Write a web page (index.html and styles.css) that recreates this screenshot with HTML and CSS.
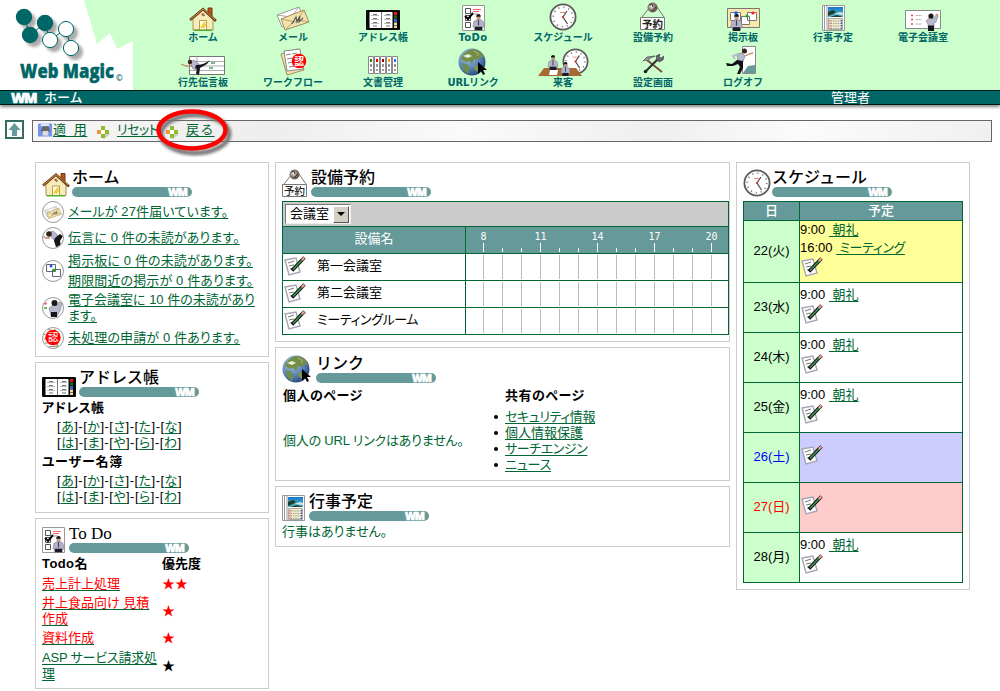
FILE: index.html
```html
<!DOCTYPE html>
<html lang="ja">
<head>
<meta charset="utf-8">
<title>Web Magic - ホーム</title>
<link rel="stylesheet" href="styles.css">
</head>
<body>
<svg class="defs" width="0" height="0" aria-hidden="true">
  <defs>
    <radialGradient id="ocean" cx=".35" cy=".3" r=".8"><stop offset="0" stop-color="#a9c6e8"/><stop offset=".55" stop-color="#5c84ba"/><stop offset="1" stop-color="#203a6c"/></radialGradient>
    <linearGradient id="sky" x1="0" y1="0" x2="0" y2="1"><stop offset="0" stop-color="#1976c8"/><stop offset="1" stop-color="#50b8c8"/></linearGradient>
    <radialGradient id="steel" cx=".4" cy=".4" r=".7"><stop offset="0" stop-color="#eee"/><stop offset=".5" stop-color="#87766c"/><stop offset="1" stop-color="#4d443e"/></radialGradient>
    <filter id="soft" x="-30%" y="-30%" width="160%" height="160%"><feGaussianBlur stdDeviation="1.6"/></filter>
  </defs>
  <symbol id="house" viewBox="0 0 28 24">
    <path d="M19 1h4v9h-4z" fill="#b5541c" stroke="#7b3512"/>
    <path d="M4 12 14 3l10 9v11H4z" fill="#f7ecb8" stroke="#a89058"/>
    <path d="M1 13 14 2l13 12" fill="none" stroke="#6b3a12" stroke-width="2.4"/>
    <path d="M1.500 12.500 14 2l12 10.500" fill="none" stroke="#c99552"/>
    <path d="M10.500 13.500h7V23h-7z" fill="#fffbe0" stroke="#b89b57"/>
    <path d="m12 21 4-6m-2 6 3-4" stroke="#f4c728" stroke-width="1.500"/>
    <path d="m12 7 2 2 1-3z" fill="#c22"/><path d="m14 9 2-1" stroke="#363"/>
    <path d="M5 23.300h18" stroke="#4fae28" stroke-width="1.400"/>
  </symbol>
  <symbol id="mail" viewBox="0 0 34 25">
    <path d="m1 9 22-8 5 12-22 8z" fill="#fff" stroke="#999"/><path d="m1 9 14 2 8-10" fill="none" stroke="#aaa"/>
    <path d="m5 13 23-9 5 12-24 8z" fill="#f3e2ac" stroke="#a18c5a"/><path d="m5 13 15 3 8-12M9 24l8-8m16 0-11-2" fill="none" stroke="#b8a269"/>
    <path d="m16 18 4-7 1 5 3-6-1 6 4-4" fill="none" stroke="#555" stroke-width="1.100"/>
  </symbol>
  <symbol id="book" viewBox="0 0 34 20">
    <rect width="34" height="20" rx="1" fill="#080808"/><path d="M3.500 2h11.500v16H3.500zM16 2h10.500v16H16z" fill="#fff"/>
    <path d="M15.500 2v16" stroke="#777"/>
    <path d="M5 5.500h8M5 9.500h8M5 13.500h8M18 5.500h7M18 9.500h7M18 13.500h7" stroke="#bbb"/>
    <path d="M7 4.500h4M7 8.500h4M7 12.500h4M7 16h4M20 4.500h4M20 8.500h4M20 12.500h4M20 16h4" stroke="#777"/>
    <path d="M28 2h3v3h-3z" fill="#e11"/><path d="M28 5.500h3v3h-3z" fill="#176d1c"/><path d="M28 9h3v3h-3z" fill="#36c"/><path d="M28 12.500h3v2.500h-3zM28 15.500h3V18h-3z" fill="#f0dca0"/>
  </symbol>
  <symbol id="man" viewBox="0 0 12 18">
    <path d="M4 2q2-3 4 0v4H4z" fill="#c59a7e"/><path d="M3.500 3q0-3 3-3 2 0 2 3z" fill="#1b1512"/>
    <path d="m1 8 4-2h3l3 2 1 6-2 1v2H2v-2L0 14z" fill="#b4b4c8" stroke="#777790" stroke-width=".6"/><path d="M6 6.500v6" stroke="#445" stroke-width="1.300"/><path d="M2 14h8v4H2z" fill="#1c1c26"/>
  </symbol>
  <symbol id="todo" viewBox="0 0 23 26">
    <path d="M.5.500h22v25H.5z" fill="#fff" stroke="#999"/>
    <path d="M3.500 3.500h5v5h-5zM3.500 10.500h5v5h-5zM3.500 17.500h5v5h-5z" fill="#fff" stroke="#555"/>
    <path d="m3 11 3 3 5-6" fill="none" stroke="#000" stroke-width="2"/>
    <path d="M11 4.500h8M11 6.500h6" stroke="#e66"/><path d="M11 9h5" stroke="#999"/>
    <use href="#man" x="10" y="9" width="13" height="16.500"/>
  </symbol>
  <symbol id="clock" viewBox="0 0 28 28">
    <circle cx="14" cy="14" r="12.600" fill="#fff" stroke="#5a5a5a" stroke-width="1.800"/>
    <circle cx="14" cy="14" r="9.800" fill="none" stroke="#888" stroke-width="1.800" stroke-dasharray="1.200 3.930"/>
    <path d="M11 9.500h5" stroke="#e88"/><path d="m18 8-4 6 4.500 7" fill="none" stroke="#555" stroke-width="1.300"/><circle cx="14" cy="14" r="1" fill="#e22"/>
  </symbol>
  <symbol id="reserve" viewBox="0 0 26 28">
    <path d="m2 15 8-10h7l7 10" fill="none" stroke="#777"/><circle cx="12.500" cy="5.500" r="5" fill="url(#steel)"/><path d="m9 3 3-1 1 3m-1 4 4-4" fill="none" stroke="#383330"/>
    <path d="M.5 15.500h24v12H.5z" fill="#fff" stroke="#777"/><text x="2" y="25.500" font-size="10.500" fill="#222">予約</text>
  </symbol>
  <symbol id="board" viewBox="0 0 33 23">
    <path d="M.5.500h32v19H.5z" fill="#f8e8aa" stroke="#777"/><path d="M3.500 4.500h10v8h-10zM14.500 8.500h8v8h-8zM20.500 4.500h9v8h-9z" fill="#fff" stroke="#777"/>
    <circle cx="9" cy="5" r="1.800" fill="#25f"/><circle cx="20" cy="8" r="1.600" fill="#2a2"/><circle cx="26" cy="5" r="1.600" fill="#e22"/>
    <use href="#man" x="3" y="6" width="13" height="17"/>
  </symbol>
  <symbol id="calendar" viewBox="0 0 23 26">
    <path d="M.5.500h22v25H.5z" fill="#fff" stroke="#999"/><path d="M2.500 1v24M5 1v24" stroke="#999"/>
    <path d="M6 2h15v10H6z" fill="url(#sky)"/><path d="m6 7 5-2 3 2-3 2-5 2zM8 12l7-2 6 2z" fill="#263d25"/><path d="m12 9 6-2 3 1v2z" fill="#cfe3e5"/>
    <path d="M6.500 13.500h14v11h-14z" fill="#eee9c6" stroke="#aaa"/><path d="M9 16h10M9 18.500h10M9 21h10M9 23.500h10" stroke="#8a8a86" stroke-dasharray="1 1.200"/>
    <path d="M8 15v10" stroke="#e22" stroke-dasharray="1.300 1.200"/><path d="M19.500 15v10" stroke="#22d" stroke-dasharray="1.300 1.200"/>
  </symbol>
  <symbol id="meeting" viewBox="0 0 36 21">
    <path d="M.5.500h35v18H.5z" fill="#fff" stroke="#888"/><path d="M6 5.500h2M6 9.500h2M6 14h2" stroke="#e44" stroke-width="1.300"/><path d="M11 5.500h6M11 9.500h6M11 14h6" stroke="#aaa" stroke-dasharray="2 .7"/>
    <path d="m21 11 3-3h5l2-3 2 1-2 6-2 1v4h-6v-3z" fill="#b5b9c9" stroke="#667" stroke-width=".5"/><circle cx="26" cy="6" r="2.600" fill="#211814"/><path d="M23 15.500h6V21h-6z" fill="#15151b"/><circle cx="32" cy="5" r="1.300" fill="#c59a7e"/>
  </symbol>
  <symbol id="message" viewBox="0 0 45 20">
    <path d="M8.500.500h35v18h-35z" fill="#fff" stroke="#777"/><path d="M9 5.500h34M9 10h34M9 14.500h34M16 1v18" stroke="#999" stroke-width=".8"/><path d="M30 7h4M28 12h4" stroke="#4aa764" stroke-width="1.600"/>
    <path d="m9 6 4-2 5 4-2 6-4-1z" fill="#b5b8d0" stroke="#667" stroke-width=".5"/><circle cx="9" cy="6" r="2.200" fill="#35241c"/><path d="M11 10H5L0 8" fill="none" stroke="#c18a6b" stroke-width="1.300"/>
    <path d="M15 9q8 0 14-5l-3 4-7 4-1 7-3-1 1-5-2-1z" fill="#16161c"/>
  </symbol>
  <symbol id="workflow" viewBox="0 0 27 28">
    <path d="m1 6 17-5 6 21-17 5z" fill="#f3e2ac" stroke="#a18c5a"/><path d="m4 3 16-2 3 20-16 2z" fill="#fff" stroke="#888"/>
    <path d="m6 7 5-1m1 0 5-1m-10 6 5-1m1 0 5-1m-10 6 5-1m-4 5 5-1" stroke="#888"/><circle cx="19" cy="13" r="7.300" fill="#f00"/><text x="14.200" y="16.800" font-size="9.800" fill="#fff">認</text>
  </symbol>
  <symbol id="docs" viewBox="0 0 30 18">
    <path d="M.5.500h5v17h-5zM6.500.500h5v17h-5zM12.500.500h5v17h-5zM18.500.500h5v17h-5zM24.500.500h5v17h-5z" fill="#fff" stroke="#888"/>
    <path d="M2 3h2v3H2z" fill="#280"/><path d="M8 3h2v3H8z" fill="#e00"/><path d="M14 3h2v3h-2z" fill="#900"/><path d="M20 3h2v3h-2z" fill="#f90"/><path d="M26 3h2v3h-2z" fill="#36f"/>
    <path d="M3 8v3m0 2v2M9 8v3m0 2v2M15 8v3m0 2v2M21 8v3m0 2v2M27 8v3m0 2v2" stroke="#777" stroke-width="1.500"/>
  </symbol>
  <symbol id="globe" viewBox="0 0 30 28">
    <circle cx="14" cy="14" r="13.500" fill="url(#ocean)"/><path d="M4 8Q9 1 16 1l7 3 3 6-4-1-2 3-4-1-2 5-3-3-3 1-5-3z" fill="#748f45"/><path d="m4 15 5 1 3 5-2 5-5-4z" fill="#6d8c51"/><path d="m17 17 4 1 3 4-4 2-4-3z" fill="#7a9850"/><path d="m5 8 5-2 4 2-4 2z" fill="#e7eddf"/><path d="m16 3 5 3-2 2" fill="none" stroke="#b5b174"/>
    <path d="M20 14v12l3-3 2 4 2-1-2-4h4z" fill="#000"/>
  </symbol>
  <symbol id="visitor" viewBox="0 0 51 28">
    <use href="#clock" x="24" y="0" width="27" height="27"/><path d="m6 20 32 0 6 8H0z" fill="#a66b32"/><path d="M12 22h8l-1 5h-8z" fill="#fff"/>
    <use href="#man" x="9" y="7" width="12" height="15"/><use href="#man" x="21" y="14" width="13" height="14"/>
  </symbol>
  <symbol id="tools" viewBox="0 0 22 20">
    <path d="m5 6 15 12" stroke="#76503d" stroke-width="2"/><path d="m1 7 4-4 8-1-5 2-2 3-3-1z" fill="#999" stroke="#555" stroke-width=".8"/><path d="M4 17 16 5" stroke="#333" stroke-width="2.200"/><path d="m15 6-1-4 4-2-1 3 2 1 3-2-1 4-4 2z" fill="#667" stroke="#333" stroke-width=".6"/><circle cx="3.500" cy="17.500" r="1.800" fill="#222"/>
  </symbol>
  <symbol id="logoff" viewBox="0 0 30 29">
    <path d="M16.500.500h13v27h-13z" fill="#fff" stroke="#888"/><path d="m17 27 5-7 7-1v8z" fill="#699"/><circle cx="18.500" cy="5" r="2.500" fill="#342019"/>
    <path d="m11 8 5-1 3 3-2 6-5-1z" fill="#b6b8cc" stroke="#667" stroke-width=".5"/><path d="m12 8-5 2 2 3" fill="none" stroke="#b6b8cc" stroke-width="1.800"/><path d="m19 10 4-2 4-1" fill="none" stroke="#c18a6b" stroke-width="1.300"/>
    <path d="m11 14 6 1 0 7-3 6h-3l3-7-2-3-5 2H1l-1-3 6 1z" fill="#111117"/>
  </symbol>
  <symbol id="edit" viewBox="0 0 22 20">
    <path d="m1 4 11-2 4 14-11 3z" fill="#fff" stroke="#a5a5b3" stroke-width="1.400"/><path d="m4 7 6-2M5 10l5-1m-4 4 3-1" stroke="#777"/>
    <path d="m8 14.500 10-10.500" stroke="#111" stroke-width="3.400"/><path d="m9 13.500 9-9.500" stroke="#3c9a50" stroke-width="1.500"/><path d="m18 4 2.500-2.500" stroke="#422" stroke-width="3.400"/><path d="m18 4 2.200-2.300" stroke="#efb0ac" stroke-width="1.900"/>
  </symbol>
  <symbol id="disk" viewBox="0 0 16 14"><rect width="15" height="14" rx="1" fill="#7294ea"/><path d="M3 0h9v3H3z" fill="#dce6fb"/><path d="m3 8 2-5h6l2 5-1 1H4z" fill="#666"/><path d="M5 8h6v5H5z" fill="#ddd"/></symbol>
  <symbol id="cross" viewBox="0 0 14 14"><path d="m10 4 4 5-6 5-3-2z" fill="#ccc"/><path d="M5 1h4v4H5zM9 5h4v4H9zM5 9h4v4H5z" fill="#8dbe28"/><path d="M1 5h4v4H1z" fill="#f0963c"/><path d="M5 5h4v4H5z" fill="#fff"/></symbol>
</svg>

<header class="top">
  <svg class="logo" width="133" height="90" viewBox="0 0 133 90">
    <path d="M0 0h84l13 44 13-11 7 16 16-8v49H0z" fill="#fff"/>
    <g fill="#aaa" filter="url(#soft)"><circle cx="28" cy="21" r="8"/><circle cx="49" cy="27" r="8"/><circle cx="34" cy="39" r="8"/><circle cx="54" cy="44" r="8"/><circle cx="70" cy="33" r="8"/><circle cx="75" cy="52" r="8"/></g>
    <path d="m24 17 6 18 15-12 5 17 16-11 5 19" fill="none" stroke="#066"/>
    <g fill="#066"><circle cx="24" cy="17" r="8.200"/><circle cx="45" cy="23" r="8.200"/><circle cx="30" cy="35" r="8.200"/></g>
    <g fill="#fff" stroke="#066"><circle cx="50" cy="40" r="7.600"/><circle cx="66" cy="29" r="7.600"/><circle cx="71" cy="48" r="7.600"/></g>
    <text class="brand" x="20" y="78" textLength="94" lengthAdjust="spacingAndGlyphs">Web Magic</text><text class="brand-mark" x="116" y="81">©</text>
  </svg>
  <nav class="menu">
    <a><svg width="28" height="24"><use href="#house"/></svg>ホーム</a>
    <a><svg width="34" height="25"><use href="#mail"/></svg>メール</a>
    <a><svg class="up1" width="34" height="20"><use href="#book"/></svg>アドレス帳</a>
    <a><svg width="23" height="26"><use href="#todo"/></svg><span class="wide">ToDo</span></a>
    <a><svg width="28" height="28"><use href="#clock"/></svg>スケジュール</a>
    <a><svg class="up1" width="26" height="28"><use href="#reserve"/></svg>設備予約</a>
    <a><svg width="33" height="23"><use href="#board"/></svg>掲示板</a>
    <a><svg width="23" height="26"><use href="#calendar"/></svg>行事予定</a>
    <a><svg width="36" height="21"><use href="#meeting"/></svg>電子会議室</a>
    <a><svg width="45" height="20"><use href="#message"/></svg>行先伝言板</a>
    <a><svg width="27" height="28"><use href="#workflow"/></svg>ワークフロー</a>
    <a><svg class="up2" width="30" height="18"><use href="#docs"/></svg>文書管理</a>
    <a><svg width="30" height="28"><use href="#globe"/></svg><span class="tight">URLリンク</span></a>
    <a><svg width="51" height="28"><use href="#visitor"/></svg>来客</a>
    <a><svg class="up2" width="22" height="20"><use href="#tools"/></svg>設定画面</a>
    <a><svg class="up1 left" width="30" height="29"><use href="#logoff"/></svg>ログオフ</a>
  </nav>
</header>
<div class="bar"><span class="mark">WM</span><b class="where">ホーム</b><span>管理者</span></div>

<div class="tools-row">
  <svg width="19" height="19"><path d="M1 1h17v17H1z" fill="#fff" stroke="#366b60" stroke-width="2"/><path d="m9.500 3 6 7h-3.500v6h-5v-6H3.500z" fill="#699"/></svg>
  <div class="toolbar">
    <svg width="15" height="14"><use href="#disk"/></svg><a class="t1">適&ensp;用</a>
    <svg class="x1" width="14" height="14"><use href="#cross"/></svg><a class="t2">リセット</a>
    <svg class="x2" width="14" height="14"><use href="#cross"/></svg><a class="t3">戻る</a>
    <svg class="ring" width="84" height="54"><ellipse cx="43" cy="31" rx="34" ry="19" fill="none" stroke="#777" stroke-width="5" filter="url(#soft)"/><ellipse cx="40" cy="27" rx="33.500" ry="18.500" fill="none" stroke="#f00" stroke-width="4.500"/></svg>
  </div>
</div>

<main class="columns">
  <div class="col">
    <section class="panel p-home">
      <h2><svg width="28" height="25"><use href="#house"/></svg><span class="ttl">ホーム<i>WM</i></span></h2>
      <ul class="news">
        <li><span class="dot"><svg width="18" height="13"><use href="#mail"/></svg></span><a class="wider">メールが 27件届いています。</a></li>
        <li><span class="dot"><svg width="24" height="18" viewBox="0 0 24 18"><path d="m7 4 5-2 7 6-2 6-5-4z" fill="#b5b8d0" stroke="#667" stroke-width=".5"/><circle cx="8" cy="5" r="2.800" fill="#35241c"/><path d="M9 9H5L1 7" fill="none" stroke="#c18a6b" stroke-width="1.500"/><path d="m14 9 5-4 3 2-3 5 1 5-5 1-2-6z" fill="#16161c"/></svg></span><a class="wider">伝言に 0 件の未読があります。</a></li>
        <li class="tall"><span class="dot"><svg width="15" height="13"><path d="M.5.500h9v7h-9zM6.500 5.500h8v7h-8z" fill="#fff" stroke="#667"/><circle cx="5" cy="2" r="1.500" fill="#25f"/><circle cx="8" cy="6" r="1.500" fill="#2a2"/></svg></span><span><a class="wider">掲示板に 0 件の未読があります。</a><br><a class="wider">期限間近の掲示が 0 件あります。</a></span></li>
        <li class="two"><span class="dot"><svg width="20" height="18" viewBox="0 0 20 18"><path d="M1 4.500h3" stroke="#e66" stroke-width="2"/><path d="M1 9h3" stroke="#6b6" stroke-width="2"/><path d="m6 9 4-3h5l1-3 3 1-2 8-3 5H8z" fill="#b5b9c9" stroke="#667" stroke-width=".5"/><circle cx="11.500" cy="4" r="3" fill="#211814"/><path d="M8 13h6v5H8z" fill="#15151b"/></svg></span><a>電子会議室に 10 件の未読があり<br>ます。</a></li>
        <li><span class="dot"><svg width="18" height="18" viewBox="10.500 5 17 17"><use href="#workflow" width="27" height="28"/></svg></span><a class="wider">未処理の申請が 0 件あります。</a></li>
      </ul>
    </section>
    <section class="panel p-addr">
      <h2><svg width="34" height="20"><use href="#book"/></svg><span class="ttl">アドレス帳<i>WM</i></span></h2>
      <h3>アドレス帳</h3>
      <p class="kana">[<a>あ</a>]-[<a>か</a>]-[<a>さ</a>]-[<a>た</a>]-[<a>な</a>]<br>[<a>は</a>]-[<a>ま</a>]-[<a>や</a>]-[<a>ら</a>]-[<a>わ</a>]</p>
      <h3>ユーザー名簿</h3>
      <p class="kana">[<a>あ</a>]-[<a>か</a>]-[<a>さ</a>]-[<a>た</a>]-[<a>な</a>]<br>[<a>は</a>]-[<a>ま</a>]-[<a>や</a>]-[<a>ら</a>]-[<a>わ</a>]</p>
    </section>
    <section class="panel p-todo">
      <h2><svg width="23" height="26"><use href="#todo"/></svg><span class="ttl serif">To Do<i>WM</i></span></h2>
      <div class="tasks">
        <b class="wide">Todo名</b><b>優先度</b>
        <a class="late">売上計上処理</a><span class="late">★★</span>
        <a class="late">井上食品向け 見積<br>作成</a><span class="late">★</span>
        <a class="late">資料作成</a><span class="late">★</span>
        <a class="tight">ASP サービス請求処<br>理</a><span>★</span>
      </div>
    </section>
  </div>

  <div class="col">
    <section class="panel p-res">
      <h2><svg width="26" height="28"><use href="#reserve"/></svg><span class="ttl">設備予約<i>WM</i></span></h2>
      <div class="rooms">
        <div class="pick"><span class="select">会議室<em></em></span></div>
        <div class="rh name">設備名</div>
        <div class="rh hours"><span>8</span><span></span><span></span><span>11</span><span></span><span></span><span>14</span><span></span><span></span><span>17</span><span></span><span></span><span>20</span></div>
        <div class="room"><svg width="22" height="20"><use href="#edit"/></svg>第一会議室</div><div class="slots"></div>
        <div class="room"><svg width="22" height="20"><use href="#edit"/></svg>第二会議室</div><div class="slots"></div>
        <div class="room"><svg width="22" height="20"><use href="#edit"/></svg><span class="tighter">ミーティングルーム</span></div><div class="slots"></div>
      </div>
    </section>
    <section class="panel p-link">
      <h2><svg width="30" height="28"><use href="#globe"/></svg><span class="ttl">リンク<i>WM</i></span></h2>
      <div class="links">
        <div><h3>個人のページ</h3><p class="none tight">個人の URL リンクはありません。</p></div>
        <div><h3>共有のページ</h3><ul><li><a class="tighter">セキュリティ情報</a></li><li><a>個人情報保護</a></li><li><a class="tighter">サーチエンジン</a></li><li><a class="tight">ニュース</a></li></ul></div>
      </div>
    </section>
    <section class="panel p-event">
      <h2><svg width="23" height="26"><use href="#calendar"/></svg><span class="ttl">行事予定<i>WM</i></span></h2>
      <p class="none ev">行事はありません。</p>
    </section>
  </div>

  <div class="col">
    <section class="panel p-sched">
      <h2><svg width="28" height="28"><use href="#clock"/></svg><span class="ttl">スケジュール<i>WM</i></span></h2>
      <div class="week">
        <b>日</b><b>予定</b>
        <div class="day">22(火)</div><div class="plan today"><p>9:00 <a>&nbsp;朝礼</a></p><p>16:00 <a class="tighter">&nbsp;ミーティング</a></p><svg width="22" height="20"><use href="#edit"/></svg></div>
        <div class="day">23(水)</div><div class="plan"><p>9:00 <a>&nbsp;朝礼</a></p><svg width="22" height="20"><use href="#edit"/></svg></div>
        <div class="day">24(木)</div><div class="plan"><p>9:00 <a>&nbsp;朝礼</a></p><svg width="22" height="20"><use href="#edit"/></svg></div>
        <div class="day">25(金)</div><div class="plan"><p>9:00 <a>&nbsp;朝礼</a></p><svg width="22" height="20"><use href="#edit"/></svg></div>
        <div class="day sat">26(土)</div><div class="plan sat"><svg width="22" height="20"><use href="#edit"/></svg></div>
        <div class="day sun">27(日)</div><div class="plan sun"><svg width="22" height="20"><use href="#edit"/></svg></div>
        <div class="day">28(月)</div><div class="plan"><p>9:00 <a>&nbsp;朝礼</a></p><svg width="22" height="20"><use href="#edit"/></svg></div>
      </div>
    </section>
  </div>
</main>
</body>
</html>
```
FILE: styles.css
```css
* { box-sizing: border-box; margin: 0; padding: 0; }
body { width: 1000px; height: 691px; overflow: hidden; background: #fff; color: #000; font: 13px/16px "Liberation Sans", "Noto Sans CJK JP", sans-serif; font-feature-settings: "palt"; white-space: nowrap; }
svg { display: block; flex: none; }
svg text { font-family: "Noto Sans CJK JP", sans-serif; font-feature-settings: normal; }
ul { list-style: none; }
.defs { position: absolute; }
.top { display: flex; height: 90px; background: #cfc; }
svg .brand { font: 800 20px "Open Sans", sans-serif; fill: #066; stroke: #066; stroke-width: .4px; }
svg .brand-mark { font: bold 8px "Open Sans", sans-serif; fill: #066; }
.menu { display: grid; grid-template-columns: repeat(9, 90px); grid-template-rows: 45px 45px; margin-left: 25px; }
.menu a { display: flex; flex-direction: column; gap: 1px; align-items: center; justify-content: flex-end; padding-bottom: 1px; color: #066; font: bold 10px/12px "DejaVu Sans", "Noto Sans CJK JP", sans-serif; font-feature-settings: normal; }
.up1 { margin-bottom: 1px; }
.up2 { margin-bottom: 2px; }
.left { margin-right: 5px; }
.wide { letter-spacing: .4px; }
.wider { letter-spacing: .13px; }
.tight { letter-spacing: -.2px; }
.tighter { letter-spacing: -.4px; }
.bar { display: flex; align-items: center; height: 15px; padding-left: 10px; border: solid #001a1a; border-width: 1px 0; background: #066; color: #fff; box-shadow: 0 2px 3px #888; }
.mark, .ttl i { font-family: "Open Sans", sans-serif; font-style: normal; font-weight: 800; color: #fff; -webkit-text-stroke: .6px #fff; }
.mark { width: 28px; padding-left: 1px; font-size: 14px; line-height: 13px; letter-spacing: -1.500px; }
.where { width: 793px; padding-left: 6px; font-weight: 500; font-feature-settings: normal; }
.tools-row { display: flex; gap: 8px; padding: 15px 8px 0 5px; }
.toolbar { position: relative; display: flex; align-items: center; flex: 1; height: 22px; padding: 0 0 2px 5px; border: 1px solid #666; background: linear-gradient(100deg, #f6f6f6, #eee 25%, #fafafa 45%, #efefef 65%, #fbfbfb 80%, #f0f0f0); }
a { color: #063; text-decoration: underline; text-underline-offset: 2px; text-decoration-thickness: 1px; }
.menu a { color: #066; text-decoration: none; }
.t1 { width: 43px; letter-spacing: .6px; }
.t2 { width: 55px; padding-left: 7px; letter-spacing: -.5px; }
.t3 { padding-left: 7px; letter-spacing: 2px; }
.x1, .x2 { margin-top: 3px; }
.ring { position: absolute; left: 119px; top: -18px; }
.columns { display: flex; gap: 6px; padding: 20px 30px 0 35px; }
.col { display: flex; flex-direction: column; gap: 5px; width: 234px; }
.col:nth-child(2) { width: 455px; }
.panel { border: 1px solid #ccc; padding: 0 6px; }
.p-home { height: 195px; }
.p-addr { height: 151px; }
.p-todo { height: 171px; }
.p-res { height: 180px; padding-right: 0; }
.p-link { height: 134px; }
.p-event { height: 61px; }
.p-sched { height: 428px; }
h2 { display: flex; align-items: flex-end; gap: 2px; height: 34px; font-weight: 500; }
.ttl { display: flex; flex-direction: column; width: 120px; font-size: 16px; line-height: 18px; font-feature-settings: normal; }
.ttl.serif { font-family: "Liberation Serif", serif; font-size: 17px; font-weight: normal; }
.ttl i { height: 10px; padding-right: 5px; border-radius: 5px; background: #699; font-size: 10.500px; line-height: 10px; letter-spacing: -1px; text-align: right; }
.p-addr h2, .p-res h2 { gap: 3px; }
.p-sched h2 { gap: 1px; }
.p-link h2 { height: 35px; gap: 4px; }
.p-event h2, .p-todo h2 { gap: 4px; }
h3 { font-size: 13px; line-height: 16px; font-weight: bold; letter-spacing: .5px; }
.news { padding-top: 2px; }
.news li { display: flex; align-items: center; gap: 4px; height: 26px; }
.news .tall { height: 39px; line-height: 20px; }
.news .two { height: 35px; }
.dot { display: flex; align-items: center; justify-content: center; flex: none; width: 22px; height: 22px; border: 1px solid #999; border-radius: 50%; overflow: hidden; }
.p-addr h3 { padding-top: 2px; line-height: 18px; letter-spacing: .3px; }
.kana { padding: 2px 0 0 15px; letter-spacing: .5px; }
.p-addr .kana + h3 { padding-top: 2px; letter-spacing: .8px; }
.tasks { display: grid; grid-template-columns: 120px 1fr; grid-template-rows: 22px 18px 36px 18px 38px; align-items: center; }
.late { color: #f00; text-decoration-color: #063; }
.rooms { display: grid; grid-template-columns: 182px 262px; grid-template-rows: 24px repeat(4, 26px); gap: 1px; width: 447px; margin-top: 4px; padding: 1px; background: #063; }
.rooms > div { background: #fff; }
.rooms > .pick { grid-column: 1 / 3; padding: 2px; background: #ccc; }
.select { display: flex; align-items: center; justify-content: space-between; width: 66px; height: 20px; padding: 0 1px 0 4px; border: 1px solid; border-color: #777 #eee #eee #777; background: #fff; }
.select em { display: flex; align-items: center; justify-content: center; width: 16px; height: 17px; border: 1px solid; border-color: #fff #555 #555 #fff; background: #d4d0c8; }
.select em::before { content: ""; border: solid transparent; border-width: 4px 4px 0; border-top-color: #000; }
.rooms > .rh { background: #699; color: #fff; }
.name { text-align: center; line-height: 24px; }
.hours { display: grid; grid-template-columns: repeat(13, 19px); padding-left: 8px; font: 10px/12px "DejaVu Sans Mono", monospace; }
.hours span { display: flex; flex-direction: column; align-items: center; justify-content: flex-end; padding-bottom: 1px; }
.hours span::after { content: ""; width: 1px; height: 4px; background: #fff; }
.hours span:nth-child(3n+1)::after { height: 9px; }
.room { display: flex; align-items: center; gap: 11px; padding: 0 0 2px 1px; }
.rooms > .slots { background: repeating-linear-gradient(90deg, #bbb 0 1px, transparent 1px 19px) 17px 1px / 229px 24px no-repeat #fff; }
.links { display: grid; grid-template-columns: 222px 1fr; padding-left: 1px; }
.links h3 { padding-top: 5px; }
.links ul { padding-top: 5px; }
.links li { display: flex; align-items: center; }
.links li::before { content: ""; width: 4px; height: 4px; margin: 0 7px 0 -11px; border-radius: 50%; background: #000; }
.none { padding-top: 29px; color: #063; }
.ev { padding-top: 3px; }
.week { display: grid; grid-template-columns: 55px 162px; grid-template-rows: 18px 61px repeat(6, 49px); gap: 1px; width: 220px; margin-top: 4px; padding: 1px; background: #063; }
.week b { background: #699; color: #fff; font-weight: 500; text-align: center; line-height: 18px; }
.day { display: flex; align-items: center; justify-content: center; padding-bottom: 2px; background: #cfc; }
.plan { display: flex; flex-direction: column; justify-content: center; padding-bottom: 6px; background: #fff; line-height: 18px; }
.plan svg { margin-left: 1px; }
.today { background: #ff9; padding-bottom: 5px; }
.plan.sat { background: #ccf; }
.plan.sun { background: #fcc; }
.day.sat { color: #00f; }
.day.sun { color: #f00; }
```
